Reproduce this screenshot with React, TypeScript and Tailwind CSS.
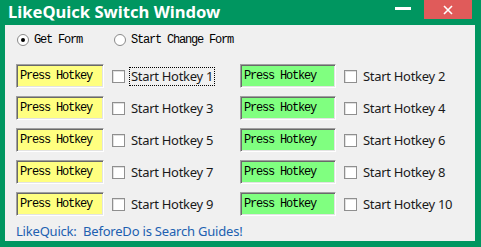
import { memo } from "react";

const yahei = "font-['Microsoft_YaHei','Noto_Sans','Noto_Sans_CJK_SC',sans-serif]";
const song = "font-['Liberation_Mono',monospace]";

const HotkeyBox = memo(({ color, width }: { color: string; width: string }) => (
  <div
    className={`${width} h-6 flex items-center pl-[2px] border [border-color:#a0a0a0_#ffffff_#ffffff_#a0a0a0] shadow-[inset_1px_1px_0_#696969,inset_-1px_-1px_0_#e3e3e3] ${color}`}
  >
    <span className={`${song} text-[12px] tracking-[-1.2px] text-black leading-none pl-[1px]`}>Press Hotkey</span>
  </div>
));

const CheckItem = memo(({ label, focused }: { label: string; focused?: boolean }) => (
  <div className="flex items-center">
    <div className="w-[13px] h-[13px] bg-white border border-[#8f8f8f] shadow-[inset_1px_1px_0_#e0e0e0]" />
    <span
      className={`ml-[5px] px-[1px] text-[13px] tracking-[-0.3px] leading-[17px] text-[#1a1a1a] ${yahei} ${
        focused ? "outline outline-1 outline-dotted outline-black" : ""
      }`}
    >
      {label}
    </span>
  </div>
));

const Radio = memo(({ checked, label }: { checked?: boolean; label: string }) => (
  <div className="flex items-center">
    <div className="w-3 h-3 rounded-full bg-white border border-[#8a8a8a] flex items-center justify-center">
      {checked && <div className="w-[4px] h-[4px] rounded-full bg-black" />}
    </div>
    <span className={`${song} ml-[5px] text-[12px] tracking-[-1.2px] text-black leading-none`}>{label}</span>
  </div>
));

export default function App() {
  const rows = [1, 3, 5, 7, 9];

  return (
    <div className="w-[481px] h-[247px] bg-[#009660] flex flex-col pl-[5px] pr-[6px] pb-[6px] overflow-hidden">
      <div className="h-[25px] shrink-0 flex items-start -mr-[6px] -ml-[5px]">
        <div className={`pl-2 pt-[1px] text-white font-bold text-[16.6px] leading-[22px] ${yahei}`}>
          LikeQuick Switch Window
        </div>
        <div className="ml-auto flex items-start">
          <div className="w-4 h-[3px] bg-white mt-[7px] mr-[13px]" />
          <div className="w-12 h-[19px] bg-[#e05b5a] flex items-center justify-center">
            <svg width="10" height="10" viewBox="0 0 10 10">
              <path d="M1 1L9 9M9 1L1 9" stroke="white" strokeWidth="1.6" />
            </svg>
          </div>
          <div className="w-[9px]" />
        </div>
      </div>

      <div className="flex-1 bg-[#f0f0f0] flex flex-col pl-[11px]">
        <div className="flex items-center h-[14px] mt-[8px] pl-[1px]">
          <div className="w-[97px]">
            <Radio checked label="Get Form" />
          </div>
          <Radio label="Start Change Form" />
        </div>

        <div className="flex flex-col gap-2 mt-[17px]">
          {rows.map((n) => (
            <div key={n} className="flex items-center">
              <div className="w-[224px] flex items-center">
                <HotkeyBox color="bg-[#ffff80]" width="w-[88px]" />
                <div className="ml-2">
                  <CheckItem label={`Start Hotkey ${n}`} focused={n === 1} />
                </div>
              </div>
              <div className="flex items-center">
                <HotkeyBox color="bg-[#80ff80]" width="w-[96px]" />
                <div className="ml-2">
                  <CheckItem label={`Start Hotkey ${n + 1}`} />
                </div>
              </div>
            </div>
          ))}
        </div>

        <div className={`mt-[5px] text-[13px] tracking-[-0.2px] leading-5 text-[#2060b0] ${yahei} whitespace-pre`}>
          {"LikeQuick:  BeforeDo is Search Guides!"}
        </div>
      </div>
    </div>
  );
}
